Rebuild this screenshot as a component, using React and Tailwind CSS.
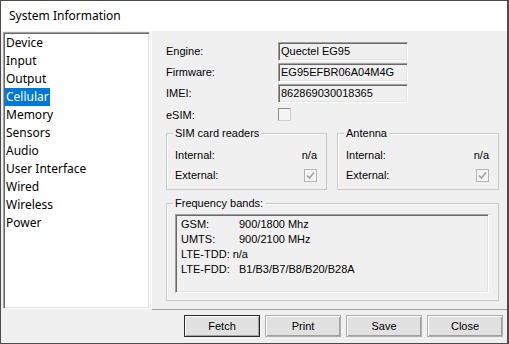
import React from 'react';

const sections = [
  'Device',
  'Input',
  'Output',
  'Cellular',
  'Memory',
  'Sensors',
  'Audio',
  'User Interface',
  'Wired',
  'Wireless',
  'Power'
];

const bands = [
  { label: 'GSM:', value: '900/1800 Mhz' },
  { label: 'UMTS:', value: '900/2100 MHz' },
  { label: 'LTE-TDD:', value: 'n/a', tight: true },
  { label: 'LTE-FDD:', value: 'B1/B3/B7/B8/B20/B28A' }
];

const sunken =
  'border border-t-[#a0a0a0] border-l-[#a0a0a0] border-b-white border-r-white shadow-[inset_1px_1px_0_#696969,inset_-1px_-1px_0_#e3e3e3]';

function TextBox({ value }) {
  return (
    <div className={`w-[130px] h-[19px] ${sunken} bg-[#f0f0f0] flex items-center pl-[2px] text-[11px] text-black`}>
      {value}
    </div>
  );
}

function CheckBox({ checked }) {
  return (
    <div
      className={`w-[13px] h-[13px] border ${
        checked ? 'border-[#b4b4b4]' : 'border-t-[#8c8c8c] border-l-[#8c8c8c] border-b-[#d0d0d0] border-r-[#d0d0d0]'
      } bg-[#f4f4f4] flex items-center justify-center`}
    >
      {checked && (
        <svg width="9" height="9" viewBox="0 0 9 9">
          <path d="M1 4.5 L3.5 7 L8 1.5" fill="none" stroke="#a0a0a0" strokeWidth="1.6" />
        </svg>
      )}
    </div>
  );
}

function GroupBox({ title, className, children }) {
  return (
    <div className={`relative border border-[#c8c8c8] shadow-[inset_1px_1px_0_#ffffff] ${className}`}>
      <span className="absolute left-[6px] -top-[8px] px-[2px] bg-[#f0f0f0] text-[11px] leading-[14px] text-black">
        {title}
      </span>
      {children}
    </div>
  );
}

function Button({ label, primary }) {
  return (
    <button
      className={`w-[76px] h-[22px] bg-[#e1e1e1] text-[11px] text-black border ${
        primary ? 'border-[#2b2b2b]' : 'border-[#adadad]'
      } shadow-[inset_1px_1px_0_#ffffff,inset_-1px_-1px_0_#a0a0a0]`}
    >
      {label}
    </button>
  );
}

export default function App() {
  return (
    <div className="w-[509px] h-[344px] border border-[#4b4b4b] border-r-2 bg-[#f0f0f0] flex flex-col font-['Liberation_Sans',Arial,sans-serif] overflow-hidden">
      {/* Title bar */}
      <div className="h-[30px] bg-white flex items-center pl-[8px] text-[12px] text-black font-['Noto_Sans',sans-serif]">
        System Information
      </div>

      {/* Main area */}
      <div className="h-[279px] flex">
        <div className={`mt-[1px] ml-[2px] w-[147px] h-[277px] bg-white ${sunken} pt-[1px] pl-[1px] font-['Noto_Sans',sans-serif] text-[12px]`}>
          {sections.map((s) => (
            <div key={s} className="h-[18px] flex items-center">
              <span
                className={`px-[1px] h-[18px] leading-[18px] ${
                  s === 'Cellular' ? 'bg-[#0078d7] text-white' : 'text-black'
                }`}
              >
                {s}
              </span>
            </div>
          ))}
        </div>

        <div className="ml-[1px] flex-1 border-l border-l-white border-b border-b-[#a0a0a0] pl-[14px] pt-[11px] text-[11px] text-black">
          <div className="grid grid-cols-[112px_130px] auto-rows-[21px]">
            <span className="h-[19px] flex items-center">Engine:</span>
            <TextBox value="Quectel EG95" />
            <span className="h-[19px] flex items-center">Firmware:</span>
            <TextBox value="EG95EFBR06A04M4G" />
            <span className="h-[19px] flex items-center">IMEI:</span>
            <TextBox value="862869030018365" />
            <span className="h-[19px] mt-[1px] flex items-center">eSIM:</span>
            <div className="pt-[3px]">
              <CheckBox />
            </div>
          </div>

          <div className="mt-[7px] flex gap-[10px]">
            <GroupBox title="SIM card readers" className="w-[161px] h-[57px]">
              <div className="px-[8px] pt-[12px]">
                <div className="h-[18px] flex items-center justify-between pr-[1px]">
                  <span>Internal:</span>
                  <span>n/a</span>
                </div>
                <div className="h-[22px] flex items-center justify-between pr-[1px]">
                  <span>External:</span>
                  <CheckBox checked />
                </div>
              </div>
            </GroupBox>
            <GroupBox title="Antenna" className="w-[162px] h-[57px]">
              <div className="px-[8px] pt-[12px]">
                <div className="h-[18px] flex items-center justify-between pr-[1px]">
                  <span>Internal:</span>
                  <span>n/a</span>
                </div>
                <div className="h-[22px] flex items-center justify-between pr-[1px]">
                  <span>External:</span>
                  <CheckBox checked />
                </div>
              </div>
            </GroupBox>
          </div>

          <GroupBox title="Frequency bands:" className="mt-[13px] w-[333px] h-[98px]">
            <div className={`mt-[10px] ml-[8px] w-[314px] h-[79px] ${sunken} bg-[#f0f0f0] pt-[2px] pl-[5px]`}>
              {bands.map((b) => (
                <div key={b.label} className="h-[15px] leading-[15px]">
                  {b.tight ? (
                    <span className="pr-[3px]">{b.label}</span>
                  ) : (
                    <span className="inline-block w-[58px]">{b.label}</span>
                  )}
                  <span>{b.value}</span>
                </div>
              ))}
            </div>
          </GroupBox>
        </div>
      </div>

      {/* Buttons */}
      <div className="mt-[5px] pr-[4px] flex justify-end gap-[5px]">
        <Button label="Fetch" primary />
        <Button label="Print" />
        <Button label="Save" />
        <Button label="Close" />
      </div>
    </div>
  );
}
